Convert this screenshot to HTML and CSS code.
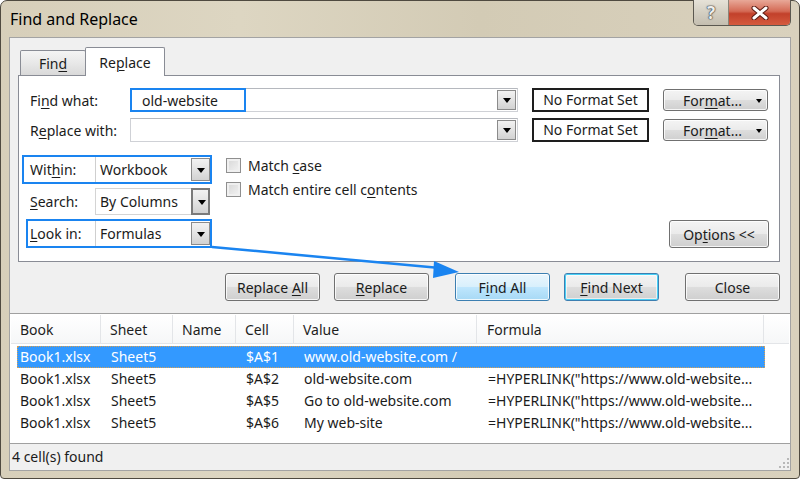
FILE: index.html
```html
<!DOCTYPE html>
<html lang="en">
<head>
    <meta charset="UTF-8">
    <title>Find and Replace</title>
    <link rel="stylesheet" href="styles.css">
</head>
<body>
    <div class="window">
        <!-- Title bar -->
        <div class="titlebar">
            <span class="title">Find and Replace</span>
            <div class="caption">
                <span class="cap-btn help">?</span>
                <span class="cap-btn close">
                    <svg width="20" height="14" viewBox="0 0 20 14">
                        <path d="M4 2 L16 12 M16 2 L4 12" stroke="#5a1a12" stroke-width="5" stroke-linecap="round"/>
                        <path d="M4 2 L16 12 M16 2 L4 12" stroke="#fff" stroke-width="3" stroke-linecap="round"/>
                    </svg>
                </span>
            </div>
        </div>

        <div class="client">
            <!-- Tabs -->
            <div class="tabs">
                <span class="tab">Fin<u>d</u></span>
                <span class="tab active">Re<u>p</u>lace</span>
            </div>

            <div class="panel">
                <div class="field-row">
                    <span class="field-label">Fi<u>n</u>d what:</span>
                    <div class="combo">
                        <span class="combo-text marked">old-website</span>
                        <span class="drop"></span>
                    </div>
                    <div class="format-box">No Format Set</div>
                    <button class="btn format-btn">For<u>m</u>at...<span class="caret"></span></button>
                </div>
                <div class="field-row">
                    <span class="field-label">R<u>e</u>place with:</span>
                    <div class="combo">
                        <span class="combo-text"></span>
                        <span class="drop"></span>
                    </div>
                    <div class="format-box">No Format Set</div>
                    <button class="btn format-btn">For<u>m</u>at...<span class="caret"></span></button>
                </div>

                <div class="options-area">
                    <div class="selects">
                        <div class="sel-row marked">
                            <span class="sel-label">Wit<u>h</u>in:</span>
                            <div class="select">Workbook<span class="drop"></span></div>
                        </div>
                        <div class="sel-row">
                            <span class="sel-label"><u>S</u>earch:</span>
                            <div class="select focused">By Columns<span class="drop"></span></div>
                        </div>
                        <div class="sel-row marked look-in">
                            <span class="sel-label"><u>L</u>ook in:</span>
                            <div class="select">Formulas<span class="drop"></span></div>
                        </div>
                    </div>
                    <div class="checks">
                        <label class="check-row"><span class="checkbox"></span><span>Match <u>c</u>ase</span></label>
                        <label class="check-row"><span class="checkbox"></span><span>Match entire cell c<u>o</u>ntents</span></label>
                    </div>
                    <button class="btn options-btn">Op<u>t</u>ions &lt;&lt;</button>
                </div>
            </div>

            <!-- Action buttons -->
            <div class="actions">
                <button class="btn action">Replace <u>A</u>ll</button>
                <button class="btn action"><u>R</u>eplace</button>
                <button class="btn action hot wide-gap">F<u>i</u>nd All</button>
                <button class="btn action default"><u>F</u>ind Next</button>
                <button class="btn action wide-gap">Close</button>
            </div>

            <!-- Results list -->
            <div class="results">
                <div class="list-head">
                    <span class="col first">Book</span>
                    <span class="col">Sheet</span>
                    <span class="col">Name</span>
                    <span class="col">Cell</span>
                    <span class="col">Value</span>
                    <span class="col formula">Formula</span>
                    <span class="col filler"></span>
                </div>
                <div class="list-body">
                    <div class="list-row selected">
                        <span class="first">Book1.xlsx</span><span>Sheet5</span><span></span><span>$A$1</span><span>www.old-website.com /</span><span class="formula"></span>
                    </div>
                    <div class="list-row">
                        <span class="first">Book1.xlsx</span><span>Sheet5</span><span></span><span>$A$2</span><span>old-website.com</span><span class="formula">=HYPERLINK("https://www.old-website...</span>
                    </div>
                    <div class="list-row">
                        <span class="first">Book1.xlsx</span><span>Sheet5</span><span></span><span>$A$5</span><span>Go to old-website.com</span><span class="formula">=HYPERLINK("https://www.old-website...</span>
                    </div>
                    <div class="list-row">
                        <span class="first">Book1.xlsx</span><span>Sheet5</span><span></span><span>$A$6</span><span>My web-site</span><span class="formula">=HYPERLINK("https://www.old-website...</span>
                    </div>
                </div>
            </div>

            <div class="status">
                <span>4 cell(s) found</span>
                <svg class="grip" width="10" height="10" viewBox="0 0 10 10">
                    <g fill="#b8b8b8">
                        <rect x="8" y="0" width="2" height="2"/>
                        <rect x="4" y="4" width="2" height="2"/><rect x="8" y="4" width="2" height="2"/>
                        <rect x="0" y="8" width="2" height="2"/><rect x="4" y="8" width="2" height="2"/><rect x="8" y="8" width="2" height="2"/>
                    </g>
                </svg>
            </div>
        </div>

        <!-- annotation arrow drawn over the dialog -->
        <svg class="arrow" width="800" height="479" viewBox="0 0 800 479">
            <path d="M212 247 L440 268" stroke="#1a84f0" stroke-width="2.5" fill="none"/>
            <path d="M434 261 L459 272 L433 278 Z" fill="#1a84f0"/>
        </svg>
    </div>
</body>
</html>
```

FILE: styles.css
```css
* {
    box-sizing: border-box;
}
body {
    margin: 0;
    font-family: "Segoe UI", "Noto Sans", "Open Sans", sans-serif;
    font-size: 14px;
    color: #1b1b1b;
    background: #fff;
}
u {
    text-decoration-thickness: 1px;
    text-underline-offset: 2px;
}
.window {
    position: relative;
    width: 800px;
    height: 479px;
    display: flex;
    flex-direction: column;
    padding: 0 8px 7px 8px;
    border: 1px solid #4f4a40;
    border-radius: 7px 7px 4px 4px;
    background: linear-gradient(90deg, #d7cfba 0%, #ddd6c2 30%, #d3cbb5 60%, #d9d1bd 100%);
}

/* title bar */
.titlebar {
    height: 36px;
    display: flex;
    align-items: flex-start;
}
.title {
    font-size: 16px;
    color: #000;
    padding: 7px 0 0 1px;
}
.caption {
    margin-left: auto;
    display: flex;
    margin-top: -1px;
    border: 1px solid #5b5850;
    border-top: none;
    border-radius: 0 0 5px 5px;
    overflow: hidden;
}
.cap-btn {
    height: 25px;
    display: flex;
    align-items: center;
    justify-content: center;
}
.help {
    width: 35px;
    font-weight: bold;
    font-size: 17px;
    color: #eeeeee;
    text-shadow: 0 0 1px #333, 0 0 1px #333, 0 0 2px #555;
    background: linear-gradient(180deg, #e6e2d8 0%, #d4cfc2 50%, #c4beb0 100%);
    border-right: 1px solid #8a8478;
}
.close {
    width: 61px;
    background: linear-gradient(180deg, #e8a898 0%, #d46a55 45%, #c2412b 55%, #d55a3e 100%);
}

/* client area */
.client {
    flex: 1;
    display: flex;
    flex-direction: column;
    background: #f0f0f0;
    border: 1px solid #a3a3a3;
}
.tabs {
    display: flex;
    align-items: flex-end;
    height: 28px;
    margin: 9px 0 0 10px;
}
.tab {
    height: 25px;
    padding: 3px 0 0;
    width: 66px;
    text-align: center;
    border: 1px solid #898c95;
    border-bottom: none;
    border-radius: 2px 2px 0 0;
    background: linear-gradient(180deg, #f4f4f4 0%, #e8e8e8 50%, #d9d9d9 100%);
}
.tab.active {
    height: 29px;
    width: 80px;
    padding-top: 5px;
    margin: 0 0 -1px -1px;
    background: #fff;
    position: relative;
    z-index: 1;
}
.panel {
    margin: 0 10px 0 8px;
    padding: 12px 9px 13px 11px;
    background: #fff;
    border: 1px solid #898c95;
}
.field-row {
    display: flex;
    align-items: center;
    height: 24px;
    margin-bottom: 6px;
}
.field-label {
    width: 100px;
}
.combo {
    width: 388px;
    height: 24px;
    display: flex;
    border: 1px solid #cfd1d6;
    border-top-color: #b5b8be;
}
.combo-text {
    flex: 1;
    padding: 1px 4px;
}
.combo-text.marked {
    flex: none;
    width: 116px;
    margin: -1px 0 -1px -1px;
    padding: 1px 10px;
    border: 2px solid #1a84f0;
}
.combo .drop {
    margin: 1px 1px 1px auto;
}
.drop {
    width: 19px;
    flex: none;
    position: relative;
    border: 1px solid #8b8b8b;
    background: linear-gradient(180deg, #f2f2f2 0%, #e3e3e3 50%, #d2d2d2 100%);
}
.drop::after {
    content: "";
    position: absolute;
    left: 5px;
    top: 50%;
    margin-top: -2px;
    border-left: 4px solid transparent;
    border-right: 4px solid transparent;
    border-top: 5px solid #000;
}
.format-box {
    width: 117px;
    height: 24px;
    margin-left: 14px;
    text-align: center;
    line-height: 20px;
    border: 2px solid #1e1e1e;
}

/* buttons */
.btn {
    font: inherit;
    color: #1b1b1b;
    border: 1px solid #707070;
    border-radius: 3px;
    background: linear-gradient(180deg, #f4f4f4 0%, #ebebeb 48%, #dddddd 52%, #cfcfcf 100%);
    box-shadow: inset 0 0 0 1px rgba(255, 255, 255, 0.8);
    padding: 0;
}
.format-btn {
    width: 105px;
    height: 22px;
    margin-left: 14px;
    position: relative;
    padding-right: 6px;
}
.caret {
    position: absolute;
    right: 5px;
    top: 9px;
    border-left: 3px solid transparent;
    border-right: 3px solid transparent;
    border-top: 4px solid #000;
}

/* within / search / look in */
.options-area {
    display: flex;
    margin-top: 13px;
}
.selects {
    display: flex;
    flex-direction: column;
    gap: 3px;
    margin-left: -8px;
}
.sel-row {
    width: 190px;
    height: 29px;
    display: flex;
    align-items: center;
    border: 2px solid transparent;
}
.sel-row.marked {
    border-color: #1a84f0;
}
.sel-row.look-in {
    margin-left: 4px;
    width: 186px;
}
.sel-label {
    width: 71px;
    padding-left: 6px;
}
.look-in .sel-label {
    width: 67px;
    padding-left: 2px;
}
.select {
    flex: 1;
    height: 25px;
    display: flex;
    align-items: center;
    padding-left: 4px;
    border-left: 1px solid #cfcfcf;
}
.select .drop {
    height: 23px;
    margin-left: auto;
}
.select.focused {
    height: 27px;
    border: 1px solid #d4d4d4;
    border-right: none;
}
.select.focused .drop {
    border: 2px solid #7a7a7a;
    height: 27px;
}
.checks {
    display: flex;
    flex-direction: column;
    margin: -2px 0 0 14px;
}
.check-row {
    display: flex;
    align-items: center;
    height: 24px;
}
.checkbox {
    width: 15px;
    height: 15px;
    margin-right: 7px;
    border: 1px solid #8f8f8f;
    background: linear-gradient(135deg, #d6d6d6 0%, #f4f4f4 100%);
    box-shadow: inset 0 0 0 2px #f0f0f0;
}
.options-btn {
    margin-left: auto;
    margin-right: 1px;
    align-self: flex-end;
    width: 100px;
    height: 28px;
}

/* bottom buttons */
.actions {
    display: flex;
    justify-content: flex-end;
    margin: 11px 10px 0 0;
}
.action {
    width: 95px;
    height: 28px;
    margin-left: 14px;
}
.action.wide-gap {
    margin-left: 26px;
}
.action.hot {
    border-color: #3c7fb1;
    background: linear-gradient(180deg, #eaf6fd 0%, #d9f0fc 48%, #bee6fd 52%, #a7d9f5 100%);
}
.action.default {
    border-color: #3c7fb1;
    box-shadow: inset 0 0 0 1px #48d0f6, inset 0 0 0 2px rgba(255, 255, 255, 0.6);
}

/* results */
.results {
    flex: 1;
    margin-top: 12px;
    padding: 1px;
    background: #fff;
    border-top: 1px solid #a0a0a0;
}
.list-head {
    display: grid;
    grid-template-columns: 90px 72px 63px 58px 183px 287px 1fr;
    height: 29px;
    background: linear-gradient(180deg, #ffffff 0%, #f6f7f8 100%);
    border-bottom: 1px solid #e3e5e8;
}
.list-head .col {
    padding: 5px 0 0 9px;
    border-right: 1px solid #e3e5e8;
    color: #1e1e1e;
}
.list-head .formula {
    padding-left: 10px;
}
.list-head .filler {
    border-right: none;
}
.list-body {
    padding: 2px 0 0 6px;
}
.list-row {
    display: grid;
    grid-template-columns: 84px 72px 63px 58px 183px 287px;
    height: 22px;
    line-height: 20px;
    border: 1px solid transparent;
    width: 748px;
}
.list-row span {
    padding-left: 9px;
    white-space: nowrap;
}
.list-row .first {
    padding-left: 2px;
}
.list-row .formula {
    padding-left: 10px;
}
.list-row.selected {
    background: #3399ff;
    color: #fff;
    border: 1px dotted #d9a050;
}

/* status bar */
.status {
    height: 27px;
    display: flex;
    align-items: center;
    justify-content: space-between;
    padding: 0 1px 2px 2px;
    border-top: 1px solid #a0a0a0;
    background: #f0f0f0;
}
.grip {
    align-self: flex-end;
    margin-bottom: 0;
}

.arrow {
    position: absolute;
    left: -1px;
    top: -1px;
    pointer-events: none;
}
```
